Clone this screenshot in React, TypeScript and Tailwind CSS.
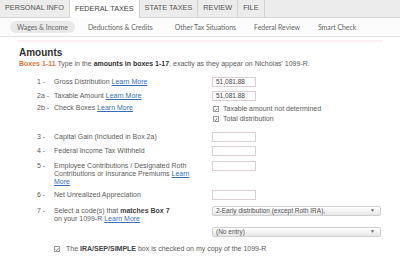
import React from 'react'

const tabs = ['PERSONAL INFO', 'FEDERAL TAXES', 'STATE TAXES', 'REVIEW', 'FILE']
const subTabs = ['Wages & Income', 'Deductions & Credits', 'Other Tax Situations', 'Federal Review', 'Smart Check']

const Learn = ({ children }: { children?: React.ReactNode }) => (
    <span className="text-[#3a6fb7] underline">{children ?? 'Learn More'}</span>
)

const Check = () => (
    <span className="inline-flex h-[6px] w-[6px] items-center justify-center border border-[#9a9a9a] bg-white">
        <svg viewBox="0 0 6 6" className="h-[5px] w-[5px]">
            <path d="M1 3.2 L2.4 4.6 L5 1.2" fill="none" stroke="#333" strokeWidth="0.9" />
        </svg>
    </span>
)

const Box = ({ value }: { value?: string }) => (
    <div className="flex h-[10px] w-[44px] items-center border border-[#dccfd3] bg-white pl-[3px] text-[6.5px] text-[#444]">
        {value}
    </div>
)

const Select = ({ text }: { text: string }) => (
    <div className="flex h-[10px] w-[169px] items-center justify-between rounded-[2px] border border-[#d0d0d0] bg-gradient-to-b from-white to-[#e6e6e6] pl-[3px] pr-[5px] text-[6.5px] text-[#555]">
        <span>{text}</span>
        <span className="text-[5px] text-[#666]">▼</span>
    </div>
)

const Row = ({ num, label, right, className }: { num: string; label: React.ReactNode; right: React.ReactNode; className: string }) => (
    <div className={`flex items-start ${className}`}>
        <div className="w-[17px] whitespace-nowrap pt-[1px] leading-[8px]">{num}</div>
        <div className="w-[158px] whitespace-nowrap pt-[1px] leading-[8px]">{label}</div>
        <div>{right}</div>
    </div>
)

export default function App() {
    return (
        <div className="h-[256px] w-[400px] overflow-hidden bg-white font-['Liberation_Sans',Arial,sans-serif] text-[7px] text-[#5c5c5c]">
            <div className="flex h-[18px] border-b border-[#d6d6d6] bg-[#ececec]">
                {tabs.map((t) => (
                    <div
                        key={t}
                        className={`flex items-center whitespace-nowrap border-r border-[#d3d3d3] px-[5px] text-[7.3px] ${
                            t === 'FEDERAL TAXES' ? '-mb-px bg-white text-[#444]' : 'text-[#555]'
                        }`}
                    >
                        {t}
                    </div>
                ))}
            </div>
            <div className="flex h-[19px] items-center whitespace-nowrap border-b border-[#e3e3e3] bg-[#fcfcfc] pl-[10px] font-['Lato',sans-serif] text-[6.9px] text-[#666]">
                {subTabs.map((t, i) => (
                    <div
                        key={t}
                        className={
                            i === 0
                                ? 'mr-[13px] flex h-[12px] shrink-0 items-center rounded-full bg-[#e9e9e9] px-[7px]'
                                : i === 1
                                ? 'mr-[22px] shrink-0'
                                : i === 2
                                ? 'mr-[18px] shrink-0'
                                : 'mr-[18px] shrink-0'
                        }
                    >
                        {t}
                    </div>
                ))}
            </div>

            <div className="mx-[17px] mt-[3px] border-t-2 border-[#fdeef2] pl-[2px]">
                <div className="mt-[5px] text-[10px] font-semibold leading-[12px] text-[#333]">Amounts</div>
                <div className="mt-[1px] whitespace-nowrap leading-[8px]">
                    <span className="font-bold text-[#e0783a]">Boxes 1-11</span> Type in the{' '}
                    <span className="font-bold text-[#333]">amounts in boxes 1-17</span>, exactly as they appear on
                    Nicholas' 1099-R.
                </div>

                <div className="pl-[18px]">
                    <Row
                        className="mt-[9px]"
                        num="1 -"
                        label={<>Gross Distribution <Learn /></>}
                        right={<Box value="51,081.88" />}
                    />
                    <Row
                        className="mt-[4px]"
                        num="2a -"
                        label={<>Taxable Amount <Learn /></>}
                        right={<Box value="51,081.88" />}
                    />
                    <Row
                        className="mt-[2px]"
                        num="2b -"
                        label={<>Check Boxes <Learn /></>}
                        right={
                            <div className="pt-[1px]">
                                <div className="flex h-[10px] items-center gap-[4px] pl-[1px]">
                                    <Check />
                                    <span>Taxable amount not determined</span>
                                </div>
                                <div className="flex h-[10px] items-center gap-[4px] pl-[1px]">
                                    <Check />
                                    <span>Total distribution</span>
                                </div>
                            </div>
                        }
                    />
                    <Row className="mt-[8px]" num="3 -" label="Capital Gain (Included in Box 2a)" right={<Box />} />
                    <Row className="mt-[4px]" num="4 -" label="Federal Income Tax Withheld" right={<Box />} />
                    <Row
                        className="mt-[5px]"
                        num="5 -"
                        label={
                            <>
                                Employee Contributions / Designated Roth
                                <br />
                                Contributions or Insurance Premiums <Learn>Learn</Learn>
                                <br />
                                <Learn>More</Learn>
                            </>
                        }
                        right={<Box />}
                    />
                    <Row className="mt-[4px]" num="6 -" label="Net Unrealized Appreciation" right={<Box />} />
                    <Row
                        className="mt-[6px]"
                        num="7 -"
                        label={
                            <>
                                Select a code(s) that <span className="font-bold text-[#444]">matches Box 7</span>
                                <br />
                                on your 1099-R <Learn />
                            </>
                        }
                        right={
                            <div>
                                <Select text="2-Early distribution (except Roth IRA)," />
                                <div className="mt-[11px]">
                                    <Select text="(No entry)" />
                                </div>
                            </div>
                        }
                    />
                    <div className="mt-[7px] flex h-[10px] items-center gap-[6px] pl-[17px]">
                        <Check />
                        <span>
                            The <span className="font-bold text-[#444]">IRA/SEP/SIMPLE</span> box is checked on my copy of
                            the 1099-R
                        </span>
                    </div>
                </div>
            </div>
        </div>
    )
}
